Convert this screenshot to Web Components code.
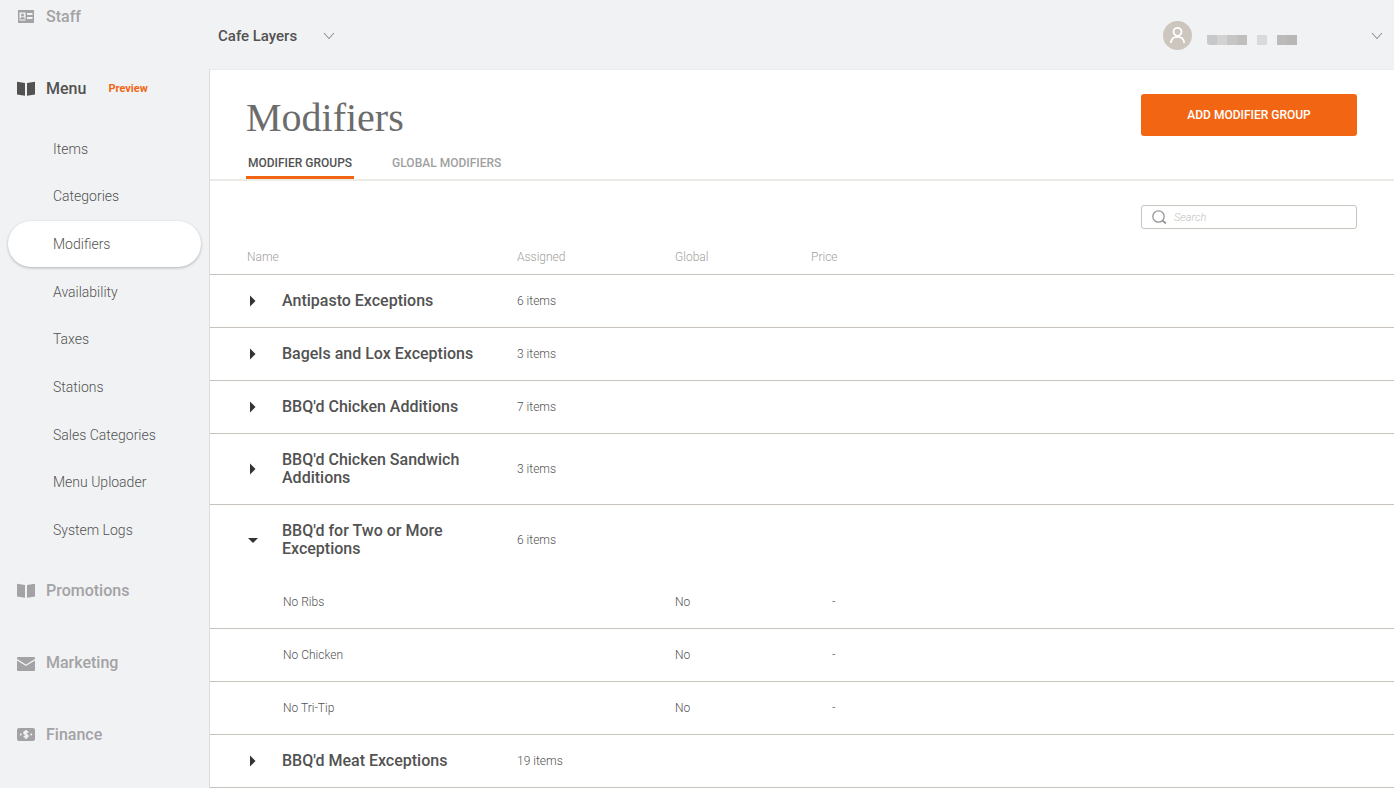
<!DOCTYPE html>
<html lang="en">
<head>
<meta charset="utf-8">
<meta name="viewport" content="width=device-width, initial-scale=1">
<title>Modifiers</title>
<style>
  html { height: 100%; }
  body {
    margin: 0; min-height: 100%; display: flex; background: #f1f2f4;
    font-family: Roboto, "Noto Sans", sans-serif; color: #525252;
    --accent: #f26613; --rule: #c8c4bd; --muted: #a3a3a5; --ink: #525252;
  }
</style>
</head>
<body>
<app-shell>
  <side-nav slot="nav">
    <nav-section icon="staff">Staff</nav-section>
    <nav-section icon="book" active badge="Preview">Menu
      <nav-item slot="items">Items</nav-item>
      <nav-item slot="items">Categories</nav-item>
      <nav-item slot="items" active>Modifiers</nav-item>
      <nav-item slot="items">Availability</nav-item>
      <nav-item slot="items">Taxes</nav-item>
      <nav-item slot="items">Stations</nav-item>
      <nav-item slot="items">Sales Categories</nav-item>
      <nav-item slot="items">Menu Uploader</nav-item>
      <nav-item slot="items">System Logs</nav-item>
    </nav-section>
    <nav-section icon="book">Promotions</nav-section>
    <nav-section icon="mail">Marketing</nav-section>
    <nav-section icon="cash">Finance</nav-section>
  </side-nav>
  <top-bar slot="top"></top-bar>
  <page-header>
    Modifiers
    <action-button slot="action">ADD MODIFIER GROUP</action-button>
    <page-tab slot="tabs" active>MODIFIER GROUPS</page-tab>
    <page-tab slot="tabs">GLOBAL MODIFIERS</page-tab>
  </page-header>
  <search-field></search-field>
  <modifier-table></modifier-table>
</app-shell>

<script>
const chevron = '<svg width="12" height="8" viewBox="0 0 12 8" fill="none" stroke="#929294" stroke-width="1.100" aria-hidden="true"><path d="M1 1l5 5.500L11 1"/></svg>';

const icons = {
  staff: '<path fill-rule="evenodd" d="M1 3h16v13H1zM2.500 5.500v8h6v-8zM10 6v2h5.500V6zM10 10v2h5.500v-2z"/><circle cx="5.500" cy="8" r="1.500"/><path d="M3 12.500q0-2.500 2.500-2.500T8 12.500z"/>',
  book: '<path d="M0 2.700L8 4V16.800L0 15.500zM18 2.700L10 4V16.800L18 15.500z"/>',
  mail: '<path d="M1 4h16q1 0 1 1v1L9 11.500 0 6V5q0-1 1-1zM0 7.500L9 13l9-5.500V17q0 1-1 1H1q-1 0-1-1z"/>',
  cash: '<rect y="3" width="18" height="13" rx="2"/><g fill="#f1f2f4"><circle cx="3.800" cy="9.500" r="1"/><circle cx="14.200" cy="9.500" r="1"/></g><path d="M11.300 7.500Q9 5.800 7.500 7T9 9.500t1.500 2.200T6.700 11.300M9 5v9" fill="none" stroke="#f1f2f4" stroke-width="1.700"/>'
};

class ShadowElement extends HTMLElement {
  constructor() {
    super();
    this.attachShadow({ mode: 'open' });
  }
  connectedCallback() {
    this.shadowRoot.innerHTML = this.render();
  }
}

customElements.define('app-shell', class extends ShadowElement {
  render() {
    return `<style>
      :host { display: grid; grid-template-columns: 209px minmax(0, 1fr); flex: 1; }
      .content { display: flex; flex-direction: column; }
      main { flex: 1; background: #fff; border-left: 1px solid #dcdcdd; border-top: 1px solid #ececed; }
    </style>
    <slot name="nav"></slot>
    <div class="content"><slot name="top"></slot><main><slot></slot></main></div>`;
  }
});

customElements.define('side-nav', class extends ShadowElement {
  render() {
    return `<style>
      :host { display: block; overflow: hidden; }
      nav { margin-top: -20px; }
    </style><nav aria-label="Main"><slot></slot></nav>`;
  }
});

customElements.define('nav-section', class extends ShadowElement {
  render() {
    const badge = this.getAttribute('badge');
    return `<style>
      :host { display: block; color: var(--muted); }
      :host([active]) { color: var(--ink); }
      a { display: flex; align-items: center; height: 72px; padding-left: 17px; color: inherit;
          text-decoration: none; font-size: 16px; font-weight: 500; }
      svg { width: 18px; height: 18px; margin-right: 11px; fill: currentColor; }
      small { margin-left: 22px; font-size: 11px; font-weight: 700; color: var(--accent); }
      .items { display: grid; grid-auto-rows: 1fr; }
      :host([active]) .items { height: 429px; padding-top: 1px; }
    </style>
    <a href="#"><svg viewBox="0 0 18 18" aria-hidden="true">${icons[this.getAttribute('icon')]}</svg><slot></slot>${badge ? `<small>${badge}</small>` : ''}</a>
    <div class="items"><slot name="items"></slot></div>`;
  }
});

customElements.define('nav-item', class extends ShadowElement {
  render() {
    return `<style>
      :host { display: flex; align-items: center; padding: 0 8px; }
      a { flex: 1; line-height: 46px; padding-left: 45px; border-radius: 23px; color: var(--ink);
          text-decoration: none; font-size: 14px; font-weight: 300; }
      :host([active]) a { background: #fff; box-shadow: 0 1px 3px #0004; }
    </style><a href="#"><slot></slot></a>`;
  }
});

customElements.define('top-bar', class extends ShadowElement {
  render() {
    return `<style>
      :host { display: flex; align-items: center; justify-content: space-between; box-sizing: border-box; height: 69px; padding-top: 2px; }
      label, button { display: flex; align-items: center; }
      label { margin-left: 9px; gap: 25px; }
      select { appearance: none; border: 0; padding: 0; background: none; font: 500 15px/20px Roboto, sans-serif; color: var(--ink); }
      button { border: 0; padding: 0; background: none; margin-right: 11px; }
      .name { display: flex; margin: 8px 74px 0 15px; }
      .name i { width: 10px; height: 10px; }
    </style>
    <label><select aria-label="Location"><option>Cafe Layers</option></select>${chevron}</label>
    <button type="button" aria-label="Account">
      <svg width="29" height="29" viewBox="0 0 29 29" aria-hidden="true"><circle cx="14.500" cy="14.500" r="14.500" fill="#ccc6bf"/><g fill="none" stroke="#fff" stroke-width="1.800"><circle cx="14.500" cy="10.800" r="4"/><path d="M7.800 22Q8.300 15.800 14.500 15.800T21.200 22"/></g></svg>
      <span class="name">
        <i style="background:#c8c8c9;border-bottom-left-radius:3px"></i><i style="background:#d2d2d3"></i><i style="background:#c5c5c5"></i><i style="background:#c0bfbd"></i><i></i><i style="background:#d9d9db"></i><i></i><i style="background:#bababa"></i><i style="background:#b8b7b5"></i>
      </span>
      ${chevron}
    </button>`;
  }
});

customElements.define('page-header', class extends ShadowElement {
  render() {
    return `<style>
      :host { display: block; border-bottom: 2px solid #ebebe7; padding: 24px 37px 0 36px; }
      .row { display: flex; justify-content: space-between; height: 61px; }
      h1 { margin: 0; font: 400 40px/48px "Liberation Serif", serif; color: #6c6c6c; }
      .tabs { display: flex; gap: 36px; }
    </style>
    <div class="row"><h1><slot></slot></h1><slot name="action"></slot></div>
    <nav class="tabs" aria-label="Modifier views"><slot name="tabs"></slot></nav>`;
  }
});

customElements.define('page-tab', class extends ShadowElement {
  render() {
    return `<style>
      :host { display: block; color: #a09f9f; border-bottom: 3px solid transparent; }
      :host([active]) { color: var(--ink); border-color: var(--accent); }
      a { display: block; padding: 0 2px 5px; color: inherit; text-decoration: none; font-size: 12px; font-weight: 500; line-height: 16px; }
    </style><a href="#"><slot></slot></a>`;
  }
});

customElements.define('action-button', class extends ShadowElement {
  render() {
    return `<style>
      :host { display: block; width: 216px; }
      button { width: 100%; height: 42px; border: 0; border-radius: 3px; background: var(--accent); color: #fff;
               font: 500 12px/16px Roboto, sans-serif; }
    </style><button type="button"><slot></slot></button>`;
  }
});

customElements.define('search-field', class extends ShadowElement {
  render() {
    return `<style>
      :host { display: flex; justify-content: flex-end; padding: 24px 37px 0; }
      label { display: flex; align-items: center; box-sizing: border-box; width: 216px; height: 24px; padding: 0 10px;
              border: 1px solid #c9c4bd; border-radius: 3px; gap: 7px; }
      input { flex: 1; min-width: 0; border: 0; padding: 1px 0 0; background: none; outline: 0; font: 300 11px/16px Roboto, sans-serif; color: var(--ink); }
      input::placeholder { font-style: italic; color: #c5c0ba; opacity: 1; }
    </style>
    <label><svg width="15" height="15" viewBox="0 0 15 15" fill="none" stroke="#98989a" stroke-width="1.300" aria-hidden="true"><circle cx="6.500" cy="6.500" r="5.700"/><path d="M10.500 10.500L14 13.500" stroke-width="1.800"/></svg>
    <input type="search" placeholder="Search" aria-label="Search modifiers"></label>`;
  }
});

customElements.define('modifier-table', class extends ShadowElement {
  render() {
    const arrow = open => `<button type="button" aria-label="Toggle group" aria-expanded="${open}"><svg width="12" height="12" viewBox="0 0 12 12" fill="#333" aria-hidden="true"><path d="${open ? 'M1 4h10L6 9z' : 'M3 0.500l5.500 5.500L3 11.500z'}"/></svg></button>`;
    const groups = [
      ['Antipasto Exceptions', '6 items'],
      ['Bagels and Lox Exceptions', '3 items'],
      ["BBQ'd Chicken Additions", '7 items'],
      ["BBQ'd Chicken Sandwich Additions", '3 items'],
      ["BBQ'd for Two or More Exceptions", '6 items', ['No Ribs', 'No Chicken', 'No Tri-Tip']],
      ["BBQ'd Meat Exceptions", '19 items']
    ];
    const rows = groups.map(([name, count, children]) =>
      `<tr class="group${children ? ' open' : ''}"><td class="toggle">${arrow(!!children)}</td><th scope="row">${name}</th><td>${count}</td><td></td><td></td><td></td></tr>` +
      (children || []).map(c => `<tr class="child"><td></td><td class="modifier">${c}</td><td></td><td>No</td><td class="price">-</td><td></td></tr>`).join('')
    ).join('');
    return `<style>
      :host { display: block; }
      table { width: 100%; table-layout: fixed; border-collapse: separate; border-spacing: 0; font-size: 12px; line-height: 16px; font-weight: 300; }
      th, td { box-sizing: border-box; padding: 0; text-align: left; border-bottom: 1px solid var(--rule); }
      thead th { height: 46px; padding-top: 11px; font-weight: 300; color: #a3a19e; }
      thead th:first-child { padding-left: 37px; }
      .group th, .group td, .child td { height: 53px; }
      .group th { padding: 17px 30px 17px 0; font-size: 16px; line-height: 18px; font-weight: 500; }
      .group.open th, .group.open td { height: 71px; border-bottom-color: transparent; }
      .toggle { padding-left: 37px; }
      .modifier { padding-left: 1px; }
      .price { padding-left: 21px; }
      button { display: block; border: 0; padding: 0; background: none; }
      svg { display: block; }
      .c1 { width: 72px; } .c2 { width: 235px; } .c3 { width: 158px; } .c4 { width: 136px; } .c5 { width: 80px; }
    </style>
    <table>
      <colgroup><col class="c1"><col class="c2"><col class="c3"><col class="c4"><col class="c5"><col></colgroup>
      <thead><tr><th colspan="2" scope="col">Name</th><th scope="col">Assigned</th><th scope="col">Global</th><th scope="col">Price</th><th></th></tr></thead>
      <tbody>${rows}</tbody>
    </table>`;
  }
});
</script>
</body>
</html>
